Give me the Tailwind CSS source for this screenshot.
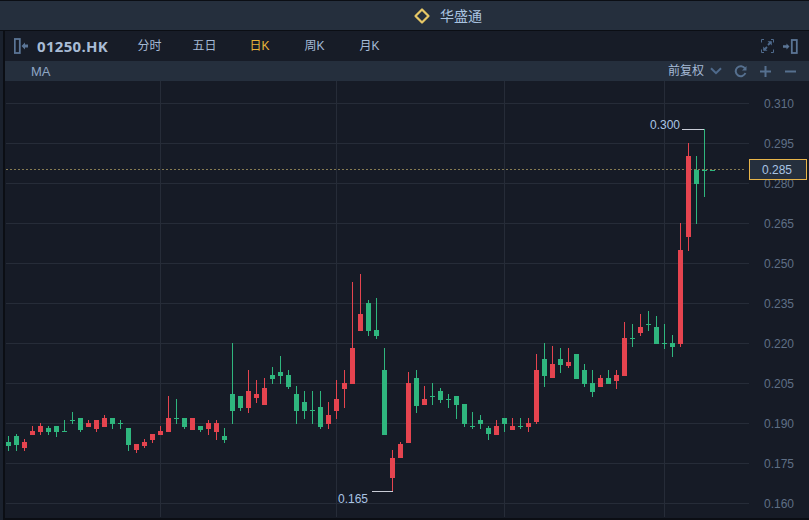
<!DOCTYPE html>
<html lang="zh-CN">
<head>
<meta charset="UTF-8">
<title>华盛通</title>
<script src="https://cdn.jsdelivr.net/npm/@tailwindcss/browser@4"></script>
</head>
<body class="bg-[#0b0e14] overflow-hidden">
<div class="w-[809px] h-[520px] flex flex-col bg-[#0b0e14] font-['Liberation_Sans','Noto_Sans_CJK_SC',sans-serif]">

  <!-- title bar -->
  <div class="h-[30px] mt-px shrink-0 bg-[#252f3d] border-b border-[#0b0e14] flex items-center pl-[413px] gap-[9px]">
    <svg width="18" height="18" viewBox="0 0 18 18" fill="none"><path d="M9 2.5 15.5 9 9 15.5 2.5 9Z" stroke="#e6c766" stroke-width="2.2" stroke-linejoin="round"/></svg>
    <span class="text-[14px] leading-none text-[#a9c3e0]">华盛通</span>
  </div>

  <div class="flex flex-1 min-h-0">
    <div class="w-[5px] shrink-0 bg-[#1a212d] border-r-2 border-[#0b0e14]"></div>
    <div class="flex-1 flex flex-col min-w-0">

      <!-- symbol + periods -->
      <div class="h-[30px] shrink-0 bg-[#171c27] flex items-center pl-[9px] pr-[11px]">
        <svg width="14" height="16" viewBox="0 0 14 16" fill="none">
          <rect x="0.8" y="1" width="5" height="14" stroke="#5b7596" stroke-width="1.8"/>
          <path d="M7.5 8 11 4.5V6.6H14V9.4H11V11.5Z" fill="#5b7596"/>
        </svg>
        <span class="ml-[9px] w-[85px] text-[15px] font-['Open_Sans'] font-bold leading-none text-[#a9bcd6] tracking-[0.3px]">01250.HK</span>
        <div class="flex text-[12px] leading-none text-[#a5bad6]">
          <span class="w-[55px] text-center">分时</span>
          <span class="w-[55px] text-center">五日</span>
          <span class="w-[55px] text-center text-[#e8b33a]">日K</span>
          <span class="w-[55px] text-center">周K</span>
          <span class="w-[55px] text-center">月K</span>
        </div>
        <div class="ml-auto flex items-center gap-[9px]">
          <svg width="13" height="14" viewBox="0 0 13 14" fill="none" stroke="#4f6a8c">
            <path d="M0.5 3.5V0.5H3M10 0.5H12.5V3.5M12.5 10.5V13.5H10M3 13.5H0.5V10.5"/>
            <path d="M3 11 6 8M7 6 10 3" stroke-width="1.8"/>
            <path d="M6.5 2.2H10.8V6.5ZM2.2 7.5V11.8H6.5Z" fill="#4f6a8c" stroke="none"/>
          </svg>
          <svg width="15" height="15" viewBox="0 0 15 15" fill="none">
            <path d="M6.5 7.5 3.5 4.5V6.2H0V8.8H3.5V10.5Z" fill="#5b7596"/>
            <rect x="8.8" y="1" width="5" height="13" stroke="#5b7596" stroke-width="1.8"/>
          </svg>
        </div>
      </div>

      <!-- indicator bar -->
      <div class="h-[20px] shrink-0 bg-[#252f3d] flex items-center pl-[26px] pr-[13px]">
        <span class="text-[13px] leading-none text-[#8ea6c4]">MA</span>
        <span class="ml-auto text-[12px] leading-none text-[#a5bad6]">前复权</span>
        <svg class="ml-[6px]" width="12" height="8" viewBox="0 0 12 8" fill="none"><path d="M1 1.2 6 6.2 11 1.2" stroke="#4f6a8c" stroke-width="2"/></svg>
        <svg class="ml-[12px]" width="13" height="13" viewBox="0 0 13 13" fill="none"><path d="M11 3.6A5 5 0 1 0 11.4 8" stroke="#56708f" stroke-width="2"/><path d="M12.5 1V5.6H8Z" fill="#56708f"/></svg>
        <svg class="ml-[13px]" width="11" height="11" viewBox="0 0 11 11" fill="none"><path d="M5.5 0V11M0 5.5H11" stroke="#56708f" stroke-width="2"/></svg>
        <svg class="ml-[14px]" width="11" height="11" viewBox="0 0 11 11" fill="none"><path d="M0 5.5H11" stroke="#56708f" stroke-width="2"/></svg>
      </div>

      <!-- chart, drawn in page coordinates -->
      <div class="flex-1 min-h-0 bg-[#161b26]">
        <svg id="chart" class="block" width="804" height="437" viewBox="5 81 804 437" font-size="12" font-family="Liberation Sans, sans-serif"></svg>
      </div>
      <div class="h-[2px] shrink-0"></div>
    </div>
  </div>
</div>

<script>
// up(1 red)/down(0 green), wick top, wick bottom, body top, body bottom
const candles = [
[0,436,451,442,446],[0,434,451,436,445],[1,439,451,442,448],[1,426,435,431,435],[1,423,435,426,432],
[0,426,435,428,432],[0,426,437,426,432],[0,420,432,431,432],[0,412,424,420,421],[0,418,432,418,430],
[1,420,427,423,427],[1,420,432,420,429],[1,415,427,418,427],[0,418,429,418,424],[0,420,429,423,424],
[0,428,451,428,445],[1,444,453,444,450],[1,439,448,442,446],[1,434,443,434,440],[1,426,435,431,435],
[1,396,432,418,432],[0,399,424,418,419],[0,418,429,418,427],[1,418,430,418,430],[0,426,432,426,430],
[1,420,435,423,429],[1,420,440,423,432],[0,428,443,436,440],[0,343,424,394,411],[0,396,411,396,408],
[1,370,413,391,408],[1,380,403,394,398],[1,378,405,388,405],[0,367,384,375,379],[0,356,384,372,376],
[0,370,389,375,387],[0,386,424,394,411],[0,391,419,402,411],[0,391,424,410,411],[0,391,429,407,427],
[1,402,429,415,424],[1,380,419,399,411],[1,370,408,383,389],[1,282,384,348,384],[1,274,331,314,331],
[0,300,336,303,331],[0,298,339,330,336],[0,348,435,370,435],[1,450,491,458,478],[1,442,458,444,458],
[1,372,443,383,443],[0,370,413,378,406],[1,386,405,399,405],[0,383,405,396,397],[0,388,403,391,400],
[0,394,408,399,400],[0,396,419,396,405],[0,404,427,404,424],[0,412,429,426,427],[0,415,429,420,424],
[0,426,440,428,434],[1,420,435,426,435],[0,418,432,418,424],[1,418,430,426,430],[0,418,429,426,427],
[1,418,432,423,427],[1,354,424,370,422],[0,343,387,359,376],[1,346,378,364,378],[0,348,373,359,365],
[1,348,368,362,366],[0,354,379,354,379],[0,364,387,370,384],[0,370,397,383,392],[1,375,387,378,387],
[0,370,384,378,384],[1,370,389,375,381],[1,322,376,338,376],[0,324,347,338,339],[1,314,336,327,333],
[0,311,331,324,325],[0,316,344,327,344],[0,324,349,343,344],[0,335,357,343,347],[1,223,347,250,344],
[1,143,251,156,237],[0,156,224,170,184],[0,129,197,170,171],[0,170,171,170,171]
];
const prices = ["0.310","0.295","0.280","0.265","0.250","0.235","0.220","0.205","0.190","0.175","0.160"];
const RED = "#e5444f", GREEN = "#2fb67e", GRID = "#262c38";

let s = "";
function rect(x, y, w, h, fill) {
  s += `<rect x="${x}" y="${y}" width="${w}" height="${h}" fill="${fill}"/>`;
}
function text(x, y, str, fill) {
  s += `<text x="${x}" y="${y}" fill="${fill}">${str}</text>`;
}

// grid
prices.forEach((p, i) => rect(6, 103 + i * 40, 743, 1, GRID));
[160, 336, 504, 664].forEach(x => rect(x, 81, 1, 436, GRID));

// last price line
for (let x = 6; x < 745; x += 4) rect(x, 169, 2, 1, "#857a52");

// candles
candles.forEach((c, i) => {
  const x = 8 + i * 8, col = c[0] ? RED : GREEN;
  if (i < candles.length - 1) rect(x, c[1], 1, c[2] - c[1], col);
  rect(x - 2, c[3], 5, c[4] - c[3], col);
});

// high / low markers
rect(682, 129, 22, 1, "#c8ccd6");
text(650, 129, "0.300", "#a9c4e4");
rect(372, 491, 21, 1, "#c8ccd6");
text(338, 503, "0.165", "#a9c4e4");

// price axis
prices.forEach((p, i) => text(764, 108 + i * 40, p, "#5f6f85"));
s += `<rect x="749.5" y="159.5" width="57" height="20" fill="#252f3d" stroke="#e8b54a"/>`;
text(762, 174, "0.285", "#a9c4e4");

document.getElementById("chart").innerHTML = s;
</script>
</body>
</html>
